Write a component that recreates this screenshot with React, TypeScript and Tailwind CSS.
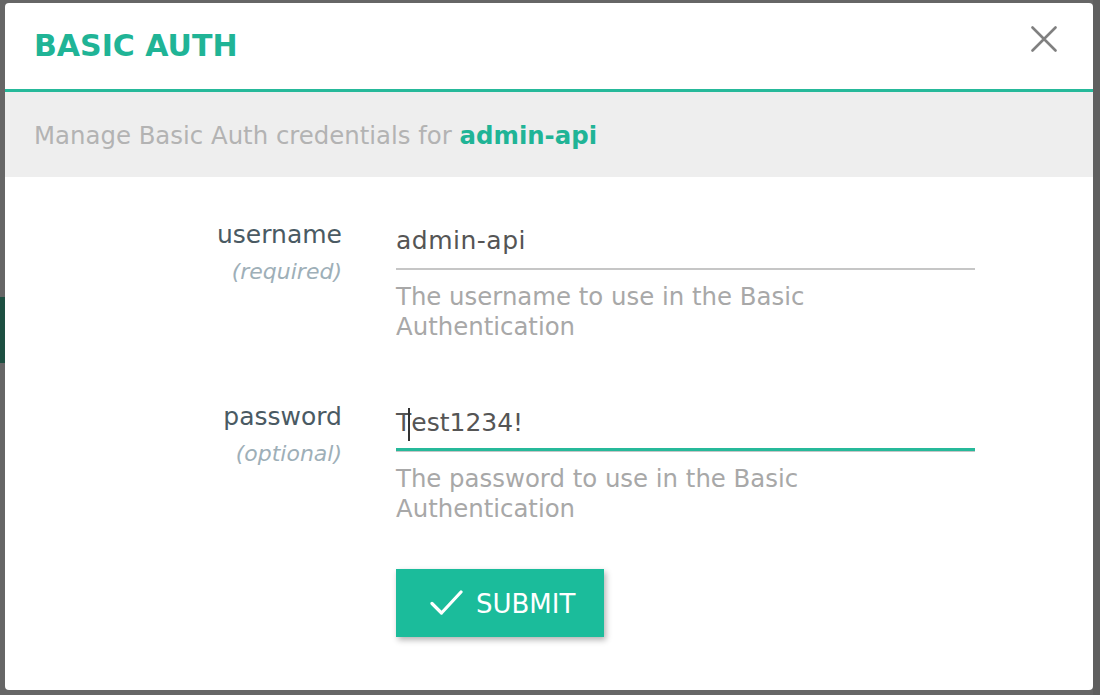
import React from "react";

function CloseIcon() {
  return (
    <svg width="26" height="26" viewBox="0 0 26 26" fill="none">
      <path d="M1.5 1.5 L24.5 24.5 M24.5 1.5 L1.5 24.5" stroke="#808080" strokeWidth="2.6" strokeLinecap="round" />
    </svg>
  );
}

function CheckIcon() {
  return (
    <svg width="33" height="26" viewBox="0 0 33 26" fill="none">
      <path d="M2 13.5 L11.5 23 L31 2" stroke="#ffffff" strokeWidth="3.2" strokeLinecap="round" strokeLinejoin="round" />
    </svg>
  );
}

export default function App() {
  return (
    <div className="w-[1100px] h-[695px] bg-[#666666] flex overflow-hidden font-['DejaVu_Sans',sans-serif]">
      <div className="w-[5px] shrink-0 flex flex-col">
        <div className="mt-[297px] h-[66px] bg-[#1d4f41]" />
      </div>
      <div className="mt-[3px] w-[1088px] h-[687px] shrink-0 bg-white rounded-[4px] overflow-hidden flex flex-col">
        <div className="h-[89px] shrink-0 flex justify-between border-b-[3px] border-[#26b99a] pl-[29px] pr-[36px]">
          <div className="self-center text-[30px] font-bold text-[#20b496] leading-none">BASIC AUTH</div>
          <div className="mt-[23px]">
            <CloseIcon />
          </div>
        </div>
        <div className="h-[85px] shrink-0 bg-[#eeeeee] flex items-center pl-[29px] pt-[4px] text-[24.4px] text-[#b3b3b3]">
          <span>
            Manage Basic Auth credentials for{" "}
            <span className="font-semibold text-[#20b496]">admin-api</span>
          </span>
        </div>
        <div className="pt-[43px] flex flex-col">
          <div className="flex">
            <div className="w-[337px] shrink-0 text-right">
              <div className="text-[25px] leading-[30px] text-[#4a5a63]">username</div>
              <div className="mt-[7px] text-[22px] leading-[30px] italic text-[#9eafb8]">(required)</div>
            </div>
            <div className="ml-[54px] w-[579px] flex flex-col">
              <div className="mt-[3px] pb-[9px] border-b-[2px] border-[#c6c6c6] text-[25px] leading-[36px] tracking-[0.5px] text-[#555555]">
                admin-api
              </div>
              <div className="mt-[12px] text-[24.4px] leading-[30px] text-[#a8a8a8]">
                The username to use in the Basic
                <br />
                Authentication
              </div>
            </div>
          </div>
          <div className="flex mt-[60px]">
            <div className="w-[337px] shrink-0 text-right">
              <div className="text-[25px] leading-[30px] text-[#4a5a63]">password</div>
              <div className="mt-[7px] text-[22px] leading-[30px] italic text-[#9eafb8]">(optional)</div>
            </div>
            <div className="ml-[54px] w-[579px] flex flex-col">
              <div className="mt-[3px] border-b-[1px] border-[#c6c6c6]">
                <div className="pb-[7px] border-b-[3px] border-[#26b99a] text-[25px] leading-[36px] text-[#555555]">
                  T<span className="inline-block align-middle w-[2px] h-[33px] -ml-[3px] mr-[1px] bg-[#333333]" />est1234!
                </div>
              </div>
              <div className="mt-[12px] text-[24.4px] leading-[30px] text-[#a8a8a8]">
                The password to use in the Basic
                <br />
                Authentication
              </div>
              <button className="mt-[45px] w-[208px] h-[68px] bg-[#1bbc9b] flex items-center pl-[34px] gap-[13px] text-white text-[26px] shadow-[2px_3px_6px_rgba(0,0,0,0.3)]">
                <CheckIcon />
                <span className="pt-[2px]">SUBMIT</span>
              </button>
            </div>
          </div>
        </div>
      </div>
      <div className="flex-1 bg-[#5f5f5f]" />
    </div>
  );
}
